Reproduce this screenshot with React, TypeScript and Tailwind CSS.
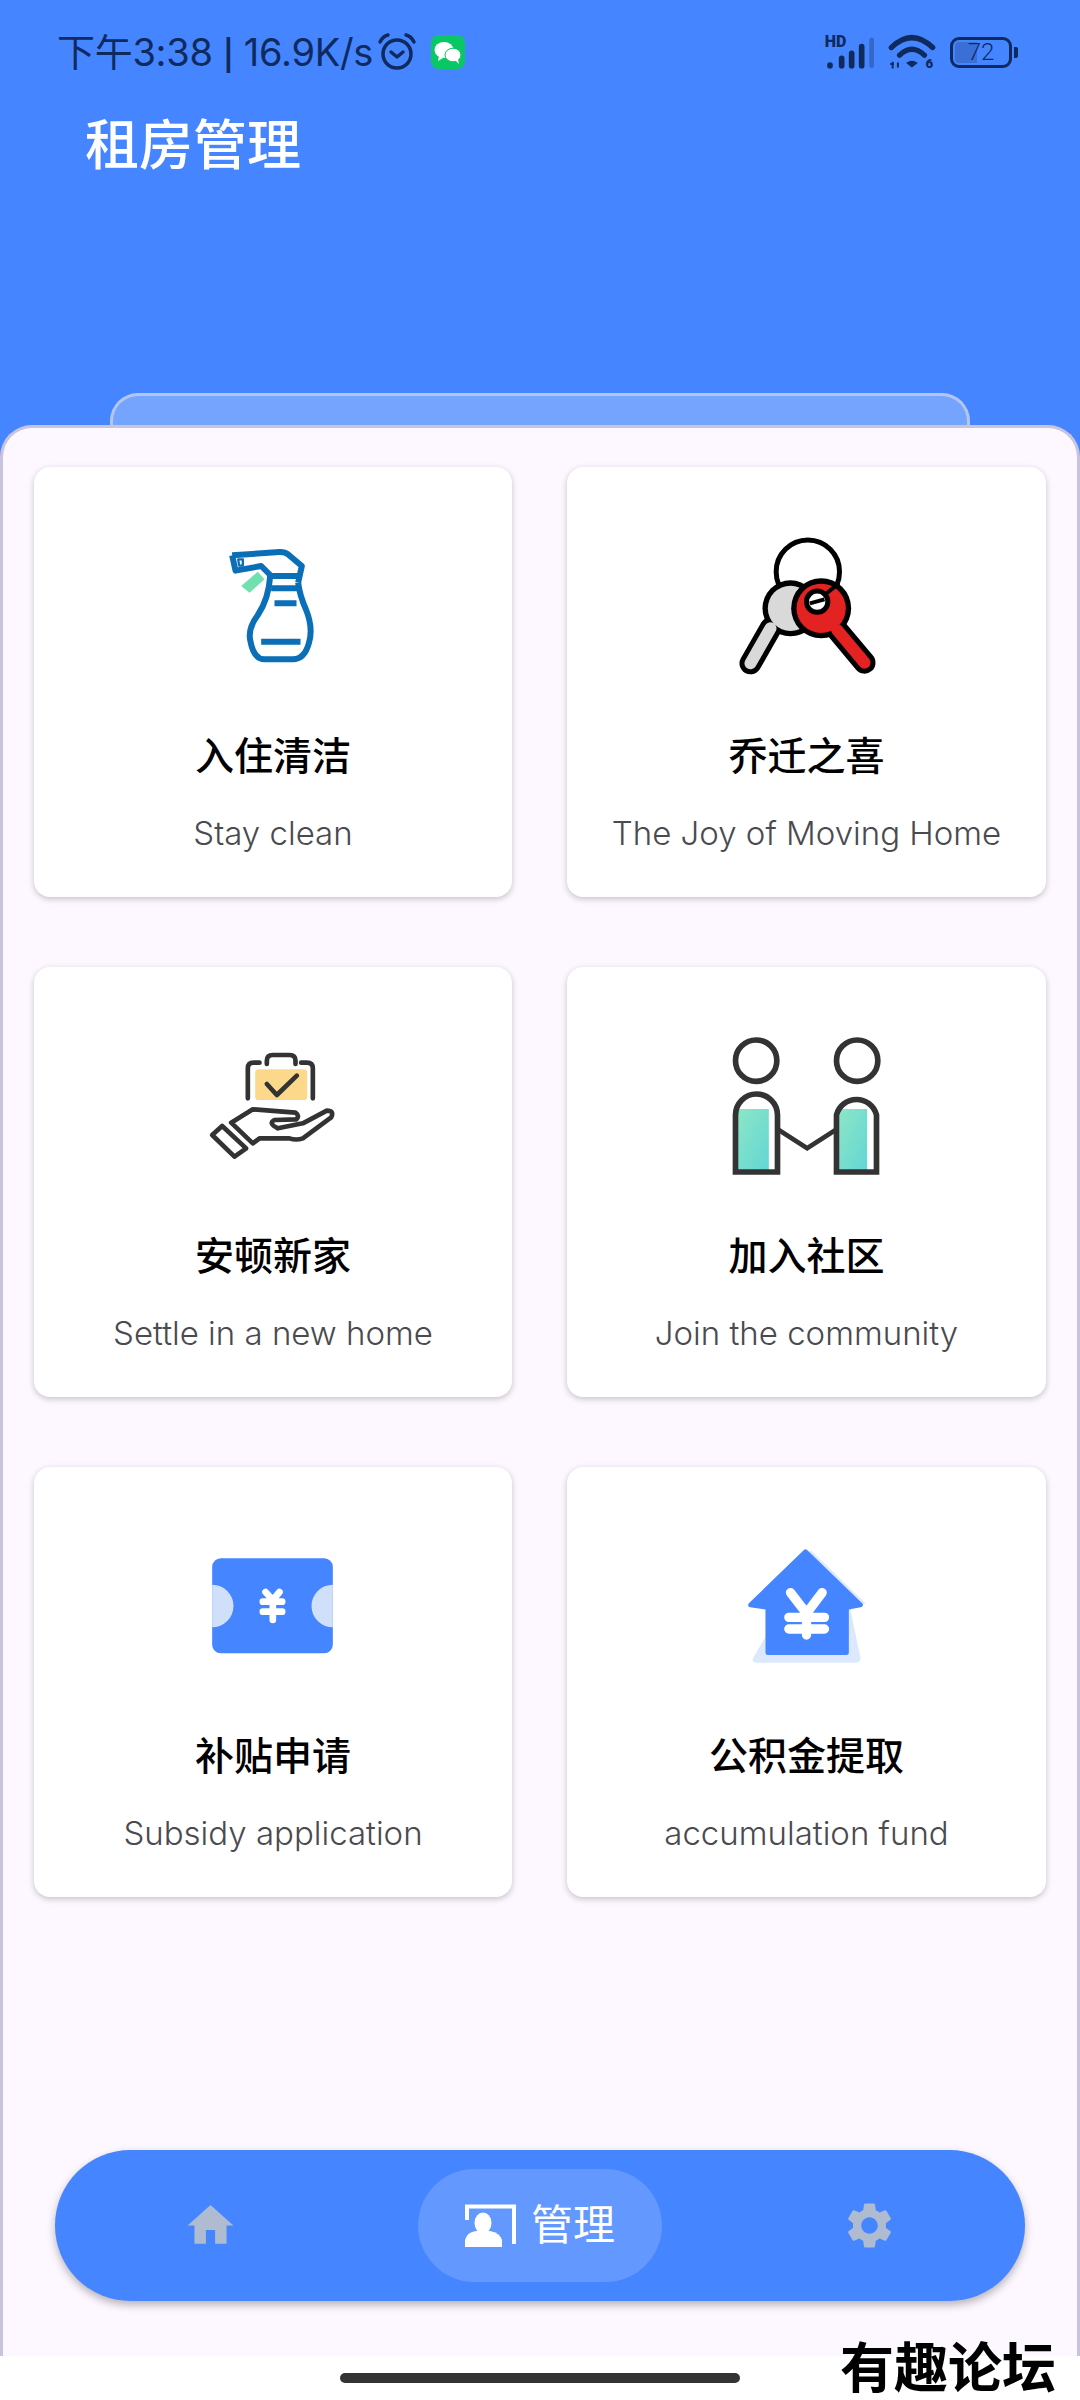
import { MdHome, MdSettings } from "react-icons/md";

const cjk = "font-['Roboto','Noto_Sans_CJK_SC',sans-serif]";

function SprayIcon() {
  return (
    <svg viewBox="-4.5 0 510 510" className="h-[170px] w-[170px]">
      <path d="M205 155L225 178L180 218L155 198Z" fill="#6fe0ae" />
      <g fill="none" stroke="#0b6fb8" strokeWidth="18" strokeLinejoin="round">
        <path d="M128 106L270 96Q285 95 297 104L337 138L326 188" />
        <path d="M128 106L138 152L215 138L245 168H326" />
        <path d="M146 118H160V137H149Z" strokeWidth="7" />
        <path d="M242 168Q238 235 205 285Q175 325 182 360Q192 418 225 418H310Q345 418 358 370Q372 325 350 270Q330 225 326 188" />
        <path d="M245 205H326M255 250H321M215 365H333" />
      </g>
    </svg>
  );
}

function KeysIcon() {
  return (
    <svg viewBox="4.5 0 510 510" className="h-[170px] w-[170px]">
      <circle cx="262" cy="155" r="95" fill="#fff" stroke="#000" strokeWidth="15" />
      <g strokeLinecap="round">
        <circle cx="210" cy="265" r="84" fill="#000" />
        <path d="M150 325L90 430" stroke="#000" strokeWidth="66" />
        <circle cx="210" cy="265" r="68" fill="#d9d9d9" />
        <path d="M150 325L90 430" stroke="#d9d9d9" strokeWidth="36" />
        <circle cx="302" cy="265" r="90" fill="#000" />
        <path d="M350 330L432 428" stroke="#000" strokeWidth="66" />
        <circle cx="302" cy="265" r="74" fill="#e52222" />
        <path d="M350 330L432 428" stroke="#e52222" strokeWidth="36" />
      </g>
      <circle cx="290" cy="245" r="32" fill="#fff" stroke="#000" strokeWidth="15" />
      <path d="M268 250L312 238M312 225L355 190" stroke="#000" strokeWidth="12" />
    </svg>
  );
}

function HandIcon() {
  return (
    <svg viewBox="-4.5 -30 510 510" className="h-[170px] w-[170px]">
      <rect x="197" y="118" width="156" height="92" rx="10" fill="#fcd98a" />
      <g fill="none" stroke="#333" strokeWidth="14" strokeLinecap="round" strokeLinejoin="round">
        <path d="M232 102V92Q232 75 250 75H300Q318 75 318 92V102" />
        <path d="M175 205V115Q175 98 192 98H210M370 205V115Q370 98 352 98H335" />
        <path d="M232 162L262 195L322 137" />
        <path d="M125 278L190 238L318 248Q332 258 320 268L255 270Q235 280 265 295L340 280L412 242Q435 242 425 262L340 325Q320 332 300 325L210 325L190 340Z" />
        <path d="M98 288L170 355L135 380L68 315Z" />
      </g>
    </svg>
  );
}

function PeopleIcon() {
  return (
    <svg viewBox="4.5 0 510 510" className="h-[170px] w-[170px]">
      <defs>
        <linearGradient id="teal" x1="0" y1="0" x2="1" y2="1">
          <stop offset="0" stopColor="#8ce6c6" />
          <stop offset="1" stopColor="#62d6d4" />
        </linearGradient>
      </defs>
      <rect x="52" y="267" width="93" height="185" fill="url(#teal)" />
      <rect x="356" y="267" width="84" height="185" fill="url(#teal)" />
      <g fill="none" stroke="#333" strokeWidth="17">
        <circle cx="107" cy="122" r="62" />
        <circle cx="410" cy="122" r="62" />
        <path d="M45 456V285A62 62 0 0 1 171 285V456Z" />
        <path d="M348 456V285A62 62 0 0 1 468 285V456Z" />
        <path d="M175 330L260 385L345 330" strokeWidth="14" />
      </g>
    </svg>
  );
}

function TicketIcon() {
  return (
    <svg viewBox="-4.5 -30 510 510" className="h-[170px] w-[170px]">
      <rect x="68" y="85" width="362" height="285" rx="26" fill="#4585ff" />
      <path d="M68 164A64 64 0 0 1 68 292ZM430 164A64 64 0 0 0 430 292Z" fill="#d0dffa" />
      <path
        d="M228 186L250 210L270 186M220 215H278M220 245H278M250 210V270"
        fill="none"
        stroke="#fff"
        strokeWidth="20"
        strokeLinecap="round"
        strokeLinejoin="round"
      />
    </svg>
  );
}

function HouseIcon() {
  return (
    <svg viewBox="4.5 -30 510 510" className="h-[170px] w-[170px]">
      <path d="M270 60L435 220L390 240L420 385Q420 398 405 398H110Q90 398 100 380L135 320V240Z" fill="#dbe8fd" />
      <path
        d="M255 65L420 225L378 232V368H142V232L90 225Z"
        fill="#4585ff"
        stroke="#4585ff"
        strokeWidth="14"
        strokeLinejoin="round"
      />
      <path
        d="M210 188L258 250L305 188M205 262H312M205 297H312M258 250V315"
        fill="none"
        stroke="#fff"
        strokeWidth="28"
        strokeLinecap="round"
        strokeLinejoin="round"
      />
    </svg>
  );
}

function ManageIcon() {
  return (
    <svg viewBox="0 0 51 43" className="h-[43px] w-[51px]">
      <path d="M2 16V2.5H49V40" fill="none" stroke="#fff" strokeWidth="4" />
      <ellipse cx="18" cy="19" rx="8.5" ry="10.5" fill="#fff" />
      <path d="M0 43V36Q2 28 11 27H25Q35 29 37 36V43Z" fill="#fff" />
    </svg>
  );
}

const cards = [
  { title: "入住清洁", sub: "Stay clean", icon: <SprayIcon /> },
  { title: "乔迁之喜", sub: "The Joy of Moving Home", icon: <KeysIcon /> },
  { title: "安顿新家", sub: "Settle in a new home", icon: <HandIcon /> },
  { title: "加入社区", sub: "Join the community", icon: <PeopleIcon /> },
  { title: "补贴申请", sub: "Subsidy application", icon: <TicketIcon /> },
  { title: "公积金提取", sub: "accumulation fund", icon: <HouseIcon /> },
];

function StatusBar() {
  return (
    <div className="flex h-[104px] items-center justify-between pl-[57px] pr-[62px] text-[#0f2a5c]">
      <div className="flex items-center">
        <span className="font-['Inter','Noto_Sans_CJK_SC',sans-serif] text-[38px] leading-none tracking-[-0.3px]">
          下午3:38 <span className="text-[30px] font-semibold">|</span> 16.9K/s
        </span>
        <svg viewBox="0 0 40 40" className="ml-[4px] h-[40px] w-[40px]">
          <g fill="none" stroke="#0f2a5c" strokeWidth="3.5" strokeLinecap="round" strokeLinejoin="round">
            <circle cx="20" cy="22" r="14" />
            <path d="M14 20L20 25L26 20M3 10Q6 4 11 3M37 10Q34 4 29 3" />
          </g>
        </svg>
        <svg viewBox="0 0 34 34" className="ml-[14px] h-[34px] w-[34px]">
          <rect width="34" height="34" rx="8" fill="#09c765" />
          <ellipse cx="13" cy="15" rx="9.5" ry="8" fill="#fff" />
          <ellipse cx="22" cy="20" rx="8" ry="6.8" fill="#fff" stroke="#09c765" />
          <path d="M8 21L7 26L12 23M24 25L28 29L27 24" fill="#fff" />
        </svg>
      </div>
      <div className="flex items-center">
        <svg viewBox="255 105 150 105" className="h-[35px] w-[50px] overflow-visible">
          <text x="254" y="142" fontFamily="Roboto, sans-serif" fontWeight="900" fontSize="48" fill="#0f2a5c">
            HD
          </text>
          <g fill="none" stroke="#0f2a5c" strokeWidth="17" strokeLinecap="round">
            <path d="M270 197V195M305 197V175M335 197V160M365 197V140" />
            <path d="M395 197V120" stroke="#3567c6" strokeWidth="14" />
          </g>
        </svg>
        <svg viewBox="440 105 145 110" className="ml-[13px] h-[37px] w-[48px] overflow-visible">
          <g fill="none" stroke="#0f2a5c" strokeWidth="16" strokeLinecap="round">
            <path d="M450 145Q512 85 575 145M475 168Q512 132 550 168" />
          </g>
          <path d="M495 192Q512 178 530 192L512 205Z" fill="#0f2a5c" />
          <path d="M447 195H458M454 188V208M470 190V205" stroke="#0f2a5c" strokeWidth="6" />
          <text x="553" y="208" fontFamily="Roboto, sans-serif" fontWeight="900" fontSize="40" fill="#0f2a5c">
            6
          </text>
        </svg>
        <div className="ml-[14px] flex h-[31px] w-[62px] items-center justify-center rounded-[9px] border-[3px] border-[#0f2a5c] bg-[linear-gradient(90deg,#3a6fd8_0,#3a6fd8_24px,transparent_24px)] bg-clip-content p-[2px]">
          <span className="font-['Roboto',sans-serif] text-[24px] font-light leading-none">72</span>
        </div>
        <div className="ml-[2px] h-[11px] w-[4px] rounded-r-[2px] bg-[#0f2a5c]" />
      </div>
    </div>
  );
}

export default function App() {
  return (
    <div className="flex h-[2400px] w-[1080px] flex-col overflow-hidden bg-[#4585ff]">
      <StatusBar />
      <div className={`${cjk} h-[86px] pl-[85px] text-[54px] font-medium leading-[86px] text-white`}>租房管理</div>

      <div className="mx-[110px] mt-[203px] h-[32px] rounded-t-[28px] border-x-[3px] border-t-[3px] border-[#b5c6ee] bg-[#75a4ff]" />

      <div className="flex h-[1931px] flex-col rounded-t-[32px] border-x-[3px] border-t-[3px] border-[#c8c4de] bg-[#fdf7ff] px-[31px] pt-[39px]">
        <div className="grid grid-cols-[478px_479px] gap-x-[55px] gap-y-[70px]">
          {cards.map((card) => (
            <div
              key={card.title}
              className="flex h-[430px] flex-col items-center rounded-[16px] bg-white pt-[53px] shadow-[0_2px_6px_rgba(0,0,0,0.22)]"
            >
              {card.icon}
              <div className={`${cjk} mt-[45px] text-[39px] font-medium leading-[44px] text-black`}>{card.title}</div>
              <div className="mt-[32px] font-['Inter',sans-serif] text-[33px] font-light leading-[44px] text-[#4a4a4f]">
                {card.sub}
              </div>
            </div>
          ))}
        </div>

        <div className="mt-auto mb-[55px] ml-[21px] flex h-[151px] w-[970px] items-center rounded-full bg-[#4585ff] pl-[128px] shadow-[0_4px_8px_rgba(0,0,0,0.28)]">
          <MdHome size={55} color="#aebbd1" />
          <div className="ml-[180px] flex h-[113px] w-[244px] items-center justify-center gap-[15px] rounded-full bg-[#6398ff]">
            <ManageIcon />
            <span className={`${cjk} text-[42px] leading-none text-white`}>管理</span>
          </div>
          <MdSettings size={55} color="#aebbd1" className="ml-[180px]" />
        </div>
      </div>

      <div className="relative flex flex-1 justify-center bg-white pt-[17px]">
        <div className="h-[10px] w-[400px] rounded-full bg-[#333]" />
        <div className="absolute right-[24px] top-[-18px] font-['Noto_Sans_CJK_SC',sans-serif] text-[54px] font-bold leading-[54px] text-black">
          有趣论坛
        </div>
      </div>
    </div>
  );
}
